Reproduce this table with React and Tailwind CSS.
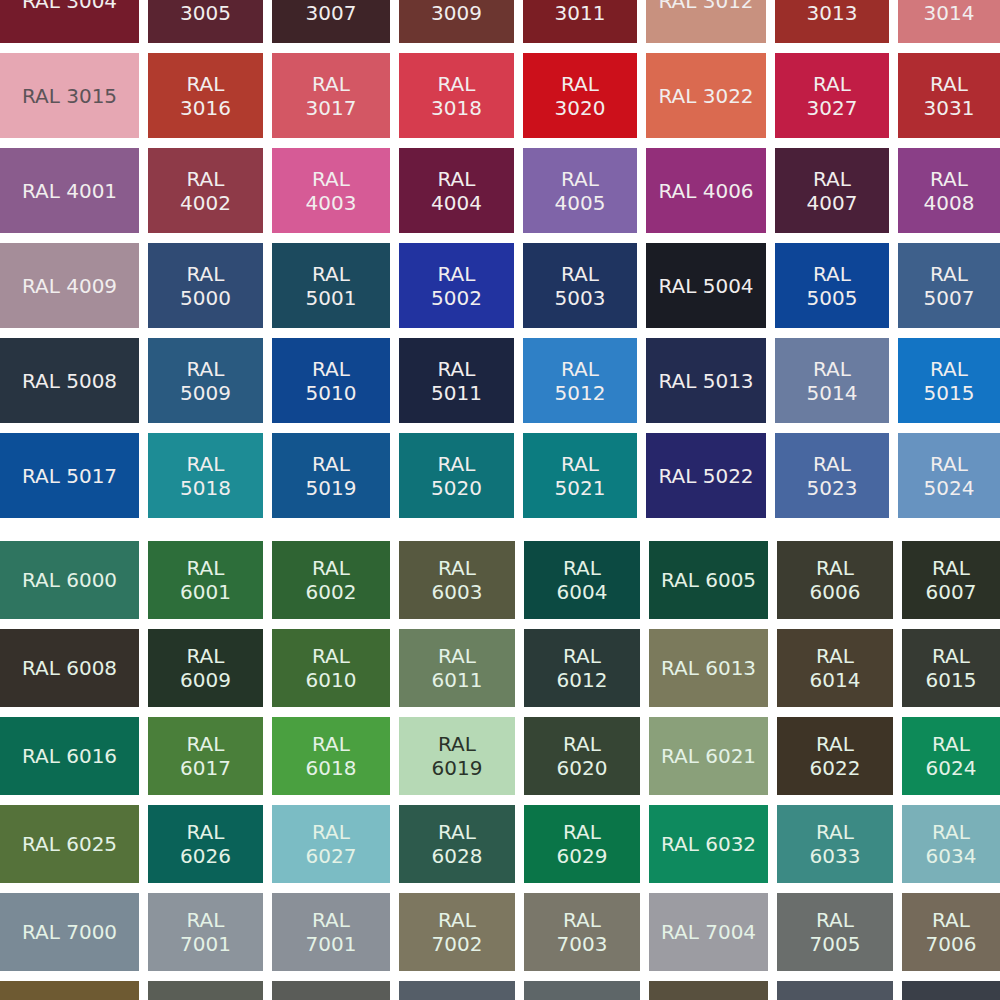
const upper = [
  [
    ['3004', 'bg-[#741b2b]'],
    ['3005', 'bg-[#5a2431]'],
    ['3007', 'bg-[#3e2428]'],
    ['3009', 'bg-[#6c3630]'],
    ['3011', 'bg-[#7b1e24]'],
    ['3012', 'bg-[#c8917f]'],
    ['3013', 'bg-[#9b2e29]'],
    ['3014', 'bg-[#d2787c]'],
  ],
  [
    ['3015', 'bg-[#e6a7b3]', 'text-[#5c5458]'],
    ['3016', 'bg-[#b13b2e]'],
    ['3017', 'bg-[#d35764]'],
    ['3018', 'bg-[#d63c4e]'],
    ['3020', 'bg-[#cc101b]'],
    ['3022', 'bg-[#da6a50]'],
    ['3027', 'bg-[#c11d45]'],
    ['3031', 'bg-[#b02c31]'],
  ],
  [
    ['4001', 'bg-[#8a5c8d]'],
    ['4002', 'bg-[#8e3a48]'],
    ['4003', 'bg-[#d65b96]'],
    ['4004', 'bg-[#6a1a3e]'],
    ['4005', 'bg-[#7f64a8]'],
    ['4006', 'bg-[#932f7a]'],
    ['4007', 'bg-[#4a2039]'],
    ['4008', 'bg-[#8a3f87]'],
  ],
  [
    ['4009', 'bg-[#a58d99]'],
    ['5000', 'bg-[#304b74]'],
    ['5001', 'bg-[#1c4a5e]'],
    ['5002', 'bg-[#2233a0]'],
    ['5003', 'bg-[#1f3460]'],
    ['5004', 'bg-[#1a1c24]'],
    ['5005', 'bg-[#0d4597]'],
    ['5007', 'bg-[#3e608b]'],
  ],
  [
    ['5008', 'bg-[#283441]'],
    ['5009', 'bg-[#2a5a80]'],
    ['5010', 'bg-[#0f4690]'],
    ['5011', 'bg-[#1c2540]'],
    ['5012', 'bg-[#2f80c6]'],
    ['5013', 'bg-[#232c50]'],
    ['5014', 'bg-[#6a7ca0]'],
    ['5015', 'bg-[#1374c4]'],
  ],
  [
    ['5017', 'bg-[#0c4f98]'],
    ['5018', 'bg-[#1d8c95]'],
    ['5019', 'bg-[#13558e]'],
    ['5020', 'bg-[#0f7278]'],
    ['5021', 'bg-[#0c7c80]'],
    ['5022', 'bg-[#27266a]'],
    ['5023', 'bg-[#4867a0]'],
    ['5024', 'bg-[#6793c0]'],
  ],
];

const lower = [
  [
    ['6000', 'bg-[#2f7560]'],
    ['6001', 'bg-[#2d6e3a]'],
    ['6002', 'bg-[#2f6433]'],
    ['6003', 'bg-[#575940]'],
    ['6004', 'bg-[#0c4a42]'],
    ['6005', 'bg-[#114a38]'],
    ['6006', 'bg-[#3c3c30]'],
    ['6007', 'bg-[#2b3126]'],
  ],
  [
    ['6008', 'bg-[#36302a]'],
    ['6009', 'bg-[#243528]'],
    ['6010', 'bg-[#3e6a33]'],
    ['6011', 'bg-[#6a8060]'],
    ['6012', 'bg-[#2a3a38]'],
    ['6013', 'bg-[#7b7a5c]'],
    ['6014', 'bg-[#4a4030]'],
    ['6015', 'bg-[#363a33]'],
  ],
  [
    ['6016', 'bg-[#0b6b52]'],
    ['6017', 'bg-[#4a7f3a]'],
    ['6018', 'bg-[#4aa040]'],
    ['6019', 'bg-[#b6d9b5]', 'text-[#2a332a]'],
    ['6020', 'bg-[#364534]'],
    ['6021', 'bg-[#8aa07a]'],
    ['6022', 'bg-[#3e3426]'],
    ['6024', 'bg-[#0d8a58]'],
  ],
  [
    ['6025', 'bg-[#55723a]'],
    ['6026', 'bg-[#0a6258]'],
    ['6027', 'bg-[#7bbcc4]'],
    ['6028', 'bg-[#2d5a4c]'],
    ['6029', 'bg-[#0a7548]'],
    ['6032', 'bg-[#0e8a5e]'],
    ['6033', 'bg-[#3c8a84]'],
    ['6034', 'bg-[#7ab0b8]'],
  ],
  [
    ['7000', 'bg-[#7a8a96]'],
    ['7001', 'bg-[#8c949c]'],
    ['7001', 'bg-[#8a9098]'],
    ['7002', 'bg-[#7d7760]'],
    ['7003', 'bg-[#7a776a]'],
    ['7004', 'bg-[#9c9ca2]'],
    ['7005', 'bg-[#6a6e6c]'],
    ['7006', 'bg-[#756a5a]'],
  ],
  [
    ['7008', 'bg-[#6e5a32]'],
    ['7009', 'bg-[#5a5e56]'],
    ['7010', 'bg-[#5a5c58]'],
    ['7011', 'bg-[#555e68]'],
    ['7012', 'bg-[#5e6668]'],
    ['7013', 'bg-[#58503e]'],
    ['7015', 'bg-[#4e5560]'],
    ['7016', 'bg-[#3a3f48]'],
  ],
];

// first and sixth column carry the label on one line
const Swatch = ({ code, bg, fg, wide }) => (
  <div className={`flex items-center justify-center text-center ${bg} ${fg || 'text-[#f1eeee]'}`}>
    {wide ? (
      <span>RAL {code}</span>
    ) : (
      <span>
        RAL
        <br />
        {code}
      </span>
    )}
  </div>
);

const App = () => {
  return (
    <div className="h-[1000px] overflow-hidden bg-white font-['DejaVu_Sans',sans-serif] text-[20px] leading-[24px]">
      <div className="-mt-[42px] flex flex-col">
        <div className="grid grid-cols-[139px_115px_118px_115px_114px_120px_114px_1fr] auto-rows-[85px] gap-x-[9px] gap-y-[10px]">
          {upper.map((row) =>
            row.map(([code, bg, fg], i) => (
              <Swatch key={code + i} code={code} bg={bg} fg={fg} wide={i === 0 || i === 5} />
            ))
          )}
        </div>

        <div className="mt-[23px] grid grid-cols-[139px_115px_118px_116px_116px_119px_116px_1fr] auto-rows-[78px] gap-x-[9px] gap-y-[10px]">
          {lower.map((row, r) =>
            row.map(([code, bg, fg], i) => (
              <Swatch key={r + '-' + i} code={code} bg={bg} fg={fg || 'text-[#e4f2e6]'} wide={i === 0 || i === 5} />
            ))
          )}
        </div>
      </div>
    </div>
  );
};

export default App;
